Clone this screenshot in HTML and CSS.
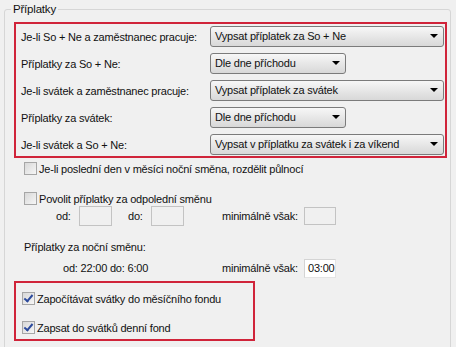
FILE: index.html
```html
<!DOCTYPE html>
<html lang="cs">
<head>
    <meta charset="UTF-8">
    <title>Příplatky</title>
    <link rel="stylesheet" href="styles.css">
</head>
<body>
    <fieldset class="group">
        <legend>Příplatky</legend>

        <div class="frame rules">
            <div class="row">
                <span class="label">Je-li So + Ne a zaměstnanec pracuje:</span>
                <div class="combo wide">Vypsat příplatek za So + Ne</div>
            </div>
            <div class="row">
                <span class="label">Příplatky za So + Ne:</span>
                <div class="combo">Dle dne příchodu</div>
            </div>
            <div class="row">
                <span class="label">Je-li svátek a zaměstnanec pracuje:</span>
                <div class="combo wide">Vypsat příplatek za svátek</div>
            </div>
            <div class="row">
                <span class="label">Příplatky za svátek:</span>
                <div class="combo">Dle dne příchodu</div>
            </div>
            <div class="row">
                <span class="label">Je-li svátek a So + Ne:</span>
                <div class="combo wide">Vypsat v příplatku za svátek i za víkend</div>
            </div>
        </div>

        <div class="check first"><span class="box"></span>Je-li poslední den v měsíci noční směna, rozdělit půlnocí</div>
        <div class="check second"><span class="box"></span>Povolit příplatky za odpolední směnu</div>

        <div class="times afternoon">
            <span class="t-label">od:</span>
            <span class="field"></span>
            <span class="t-label gap">do:</span>
            <span class="field"></span>
            <span class="t-min">minimálně však:</span>
            <span class="field"></span>
        </div>

        <div class="caption">Příplatky za noční směnu:</div>
        <div class="times night">
            <span class="t-fixed">od: 22:00 do: 6:00</span>
            <span class="t-min">minimálně však:</span>
            <span class="field filled">03:00</span>
        </div>

        <div class="frame holidays">
            <div class="check"><span class="box checked"></span>Započítávat svátky do měsíčního fondu</div>
            <div class="check next"><span class="box checked"></span>Zapsat do svátků denní fond</div>
        </div>
    </fieldset>
</body>
</html>
```

FILE: styles.css
```css
html, body { margin: 0; padding: 0; background: #f0f0f0; }
body { font-family: "Liberation Sans", Arial, sans-serif; font-size: 11px; letter-spacing: -0.2px; color: #111; width: 456px; height: 347px; overflow: hidden; white-space: nowrap; }

.group { margin: 2px 0 0 4px; width: 447px; padding: 0 0 20px 0; border: 1px solid #d6d6d6; border-radius: 3px; box-sizing: border-box; min-width: 0; }
.group legend { padding: 0 2px; margin-left: 6px; line-height: 14px; font-size: 11.5px; }

.frame { border: 2px solid #d0243a; }
.rules { margin: 6px 3px 0 9px; padding: 2px 0 1px 5px; }
.row { display: flex; align-items: center; height: 21px; }
.row + .row { margin-top: 6px; }
.label { width: 189px; flex: none; }

.combo { position: relative; width: 136px; height: 21px; box-sizing: border-box; padding: 0 0 0 4px; line-height: 19px; border: 1px solid #7b7b7b; border-radius: 3px; background: linear-gradient(#f7f7f7, #e4e4e4 60%, #d8d8d8); }
.combo.wide { width: 234px; }
.combo::after { content: ""; position: absolute; right: 5px; top: 7px; border-left: 4px solid transparent; border-right: 4px solid transparent; border-top: 4px solid #000; }

.check { display: flex; align-items: center; height: 15px; margin-left: 19px; }
.check.first { margin-top: 3px; }
.check.second { margin-top: 15px; }
.box { width: 13px; height: 13px; box-sizing: border-box; flex: none; margin-right: 2px; border: 1px solid #a6a6a6; background: linear-gradient(135deg, #d8d8d8, #f6f6f6); position: relative; }
.box.checked::after { content: ""; position: absolute; left: 3px; top: 0px; width: 3px; height: 7px; border: solid #2c4a9c; border-width: 0 2px 2px 0; transform: rotate(40deg); }

.times { display: flex; align-items: center; }
.afternoon { height: 20px; margin-left: 51px; }
.t-label { width: 23px; flex: none; }
.t-label.gap { margin-left: 16px; }
.field { width: 33px; height: 20px; flex: none; box-sizing: border-box; border: 1px solid #c3c3c3; background: #f0f0f0; }
.afternoon .field:last-child { width: 32px; height: 18px; }
.t-min { margin-left: 38px; width: 82px; flex: none; }

.caption { margin: 14px 0 0 19px; height: 15px; line-height: 15px; }
.night { height: 20px; margin: 3px 0 0 58px; }
.t-fixed { width: 159px; flex: none; }
.night .t-min { margin-left: 0; }
.field.filled { width: 32px; height: 19px; background: #fff; border-color: #d4d4d4 #e4e4e4 #e4e4e4 #d4d4d4; padding-left: 3px; line-height: 17px; }

.holidays { width: 241px; box-sizing: border-box; margin: 3px 0 0 9px; padding: 8px 0 4px 6px; }
.holidays .check { margin-left: 0; }
.holidays .check.next { margin-top: 14px; }
```
